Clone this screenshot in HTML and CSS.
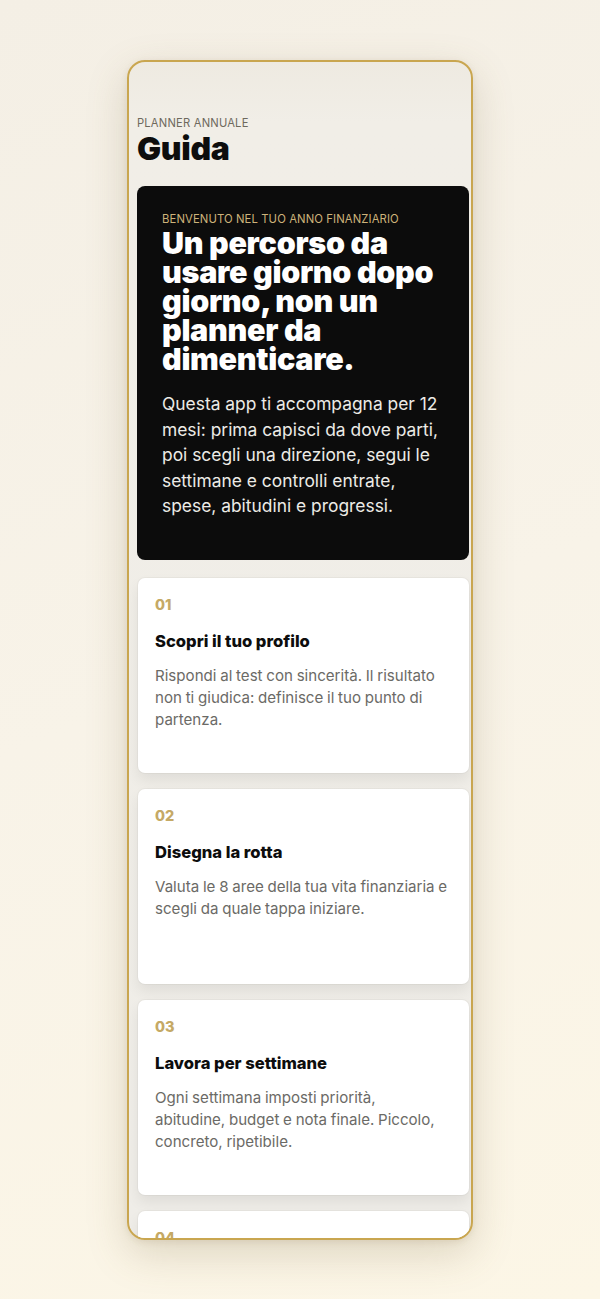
FILE: index.html
```html
<!DOCTYPE html>
<html lang="it">
  <head>
    <meta charset="UTF-8" />
    <meta name="viewport" content="width=device-width, initial-scale=1.0" />
    <title>Guida</title>
    <link rel="stylesheet" href="styles.css">
  </head>
  <body>
    <div class="phone">
      <div class="screen">
        <header class="top">
          <p class="kicker">PLANNER ANNUALE</p>
          <h1 class="title">Guida</h1>
        </header>

        <section class="hero">
          <p class="hero-kicker">BENVENUTO NEL TUO ANNO FINANZIARIO</p>
          <h2 class="hero-title">Un percorso da usare giorno dopo giorno, non un planner da dimenticare.</h2>
          <p class="hero-text">Questa app ti accompagna per 12 mesi: prima capisci da dove parti, poi scegli una direzione, segui le settimane e controlli entrate, spese, abitudini e progressi.</p>
        </section>

        <ul class="steps">
          <li class="step">
            <span class="num">01</span>
            <h3>Scopri il tuo profilo</h3>
            <p>Rispondi al test con sincerità. Il risultato non ti giudica: definisce il tuo punto di partenza.</p>
          </li>
          <li class="step">
            <span class="num">02</span>
            <h3>Disegna la rotta</h3>
            <p>Valuta le 8 aree della tua vita finanziaria e scegli da quale tappa iniziare.</p>
          </li>
          <li class="step">
            <span class="num">03</span>
            <h3>Lavora per settimane</h3>
            <p>Ogni settimana imposti priorità, abitudine, budget e nota finale. Piccolo, concreto, ripetibile.</p>
          </li>
          <li class="step">
            <span class="num">04</span>
            <h3>Controlla il mese</h3>
            <p>Registra entrate e spese, guarda i numeri e correggi la rotta quando serve.</p>
          </li>
        </ul>
      </div>
    </div>
  </body>
</html>
```

FILE: styles.css
```css
* {
  box-sizing: border-box;
}

html,
body {
  margin: 0;
  height: 100%;
}

body {
  font-family: Inter, "Noto Sans", sans-serif;
  background: linear-gradient(160deg, #f4efe5 0%, #f8f3e8 50%, #fcf6e6 100%);
  padding-top: 60px;
}

.phone {
  width: 346px;
  height: 1180px;
  margin: 0 auto;
  border: 2px solid #c9a650;
  border-radius: 18px;
  overflow: hidden;
  background: linear-gradient(180deg, #eeeae1 0%, #f1eee7 60px, #efede8 100%);
  box-shadow: 0 14px 40px rgba(120, 100, 60, 0.22), 0 2px 6px rgba(120, 100, 60, 0.12);
}

.screen {
  padding: 55px 2px 0 8px;
}

.kicker {
  margin: 0;
  font-size: 11.2px;
  line-height: 13px;
  letter-spacing: 0.2px;
  color: #6e695d;
}

.title {
  margin: 2px 0 0;
  font-size: 32px;
  font-weight: 900;
  letter-spacing: -0.3px;
  color: #0d0d0d;
  line-height: 34px;
}

.hero {
  margin-top: 20px;
  background: #0c0c0c;
  border-radius: 8px;
  padding: 26px 22px 41px 25px;
  color: #fff;
}

.hero-kicker {
  margin: 0;
  font-size: 11.3px;
  color: #cdb37a;
  letter-spacing: 0.1px;
}

.hero-title {
  margin: 2px 0 0;
  font-size: 30.5px;
  font-weight: 900;
  line-height: 29px;
  letter-spacing: -0.3px;
}

.hero-text {
  margin: 18px 0 0;
  font-size: 17.4px;
  line-height: 25.6px;
  color: #ecebe6;
}

.steps {
  list-style: none;
  margin: 18px 0 0;
  padding: 0;
  display: flex;
  flex-direction: column;
  gap: 16px;
}

.step {
  min-height: 195px;
  margin-left: 1px;
  background: #fff;
  border-radius: 7px;
  padding: 18px 20.5px 18px 17px;
  box-shadow: 0 7px 14px rgba(0, 0, 0, 0.07), 0 0 0 1px rgba(0, 0, 0, 0.03);
}

.num {
  display: block;
  font-size: 14.5px;
  font-weight: 800;
  color: #c5a965;
  line-height: 18px;
}

.step h3 {
  margin: 17px 0 0;
  font-size: 16.6px;
  font-weight: 800;
  color: #0d0d0d;
  line-height: 20px;
}

.step p {
  margin: 14px 0 0;
  font-size: 15.1px;
  line-height: 22px;
  word-spacing: -0.5px;
  color: #6b6a66;
}
```
